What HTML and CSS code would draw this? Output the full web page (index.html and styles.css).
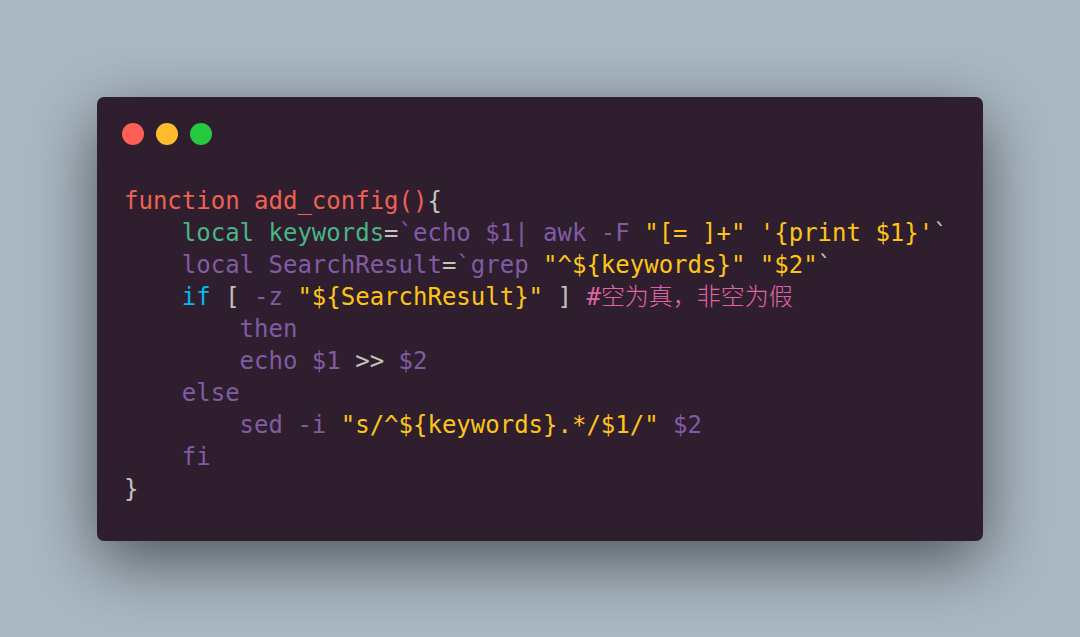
FILE: index.html
```html
<!DOCTYPE html>
<html lang="zh">
<head>
<meta charset="utf-8">
<title>add_config</title>
<link rel="stylesheet" href="styles.css">
</head>
<body>
<div class="stage">
  <div class="window">
    <div class="controls">
      <span class="dot red"></span>
      <span class="dot yellow"></span>
      <span class="dot green"></span>
    </div>
<pre class="code"><span class="fn">function add_config()</span><span class="op">{</span>
    <span class="gr">local keywords</span><span class="op">=</span><span class="pu">`echo $1| awk -F </span><span class="st">"[= ]+" '{print $1}'</span><span class="op">`</span>
    <span class="pu">local SearchResult</span><span class="op">=</span><span class="pu">`grep </span><span class="st">"^${keywords}" "$2"</span><span class="op">`</span>
    <span class="kw">if</span> <span class="op">[</span> <span class="pu">-z</span> <span class="st">"${SearchResult}"</span> <span class="op">]</span> <span class="cm">#<span class="cjk">空为真，非空为假</span></span>
        <span class="pu">then</span>
        <span class="pu">echo $1</span> <span class="op">&gt;&gt;</span> <span class="pu">$2</span>
    <span class="pu">else</span>
        <span class="pu">sed -i </span><span class="st">"s/^${keywords}.*/$1/"</span> <span class="pu">$2</span>
    <span class="pu">fi</span>
<span class="op">}</span></pre>
  </div>
</div>
</body>
</html>
```

FILE: styles.css
```css
html, body {
  margin: 0;
  padding: 0;
}

body {
  width: 1080px;
  height: 637px;
  background: #abb8c3;
  overflow: hidden;
}

.stage {
  width: 1080px;
  height: 637px;
  display: flex;
  align-items: center;
  justify-content: center;
}

.window {
  box-sizing: border-box;
  width: 886px;
  height: 444px;
  background: #2f1e2e;
  border-radius: 7px;
  box-shadow: 0 20px 68px rgba(0, 0, 0, 0.55);
  padding: 26px 27px 0 25px;
}

.controls {
  display: flex;
  gap: 12px;
  height: 22px;
}

.dot {
  width: 22px;
  height: 22px;
  border-radius: 50%;
  display: block;
}

.dot.red { background: #ff5f56; }
.dot.yellow { background: #ffbd2e; }
.dot.green { background: #27c93f; }

.code {
  margin: 40px 0 0 2px;
  font-family: "DejaVu Sans Mono", "Noto Sans CJK SC", monospace;
  font-size: 24px;
  line-height: 32px;
  color: #a39e9b;
  white-space: pre;
}

.fn { color: #ef6155; }
.op { color: #c8c2bd; }
.gr { color: #48b685; }
.pu { color: #815ba4; }
.st { color: #fec418; }
.kw { color: #06b6ef; }
.cm { color: #e065a6; }
.cjk {
  font-family: "Noto Sans CJK SC", sans-serif;
  font-weight: 300;
  line-height: 0;
}
```
